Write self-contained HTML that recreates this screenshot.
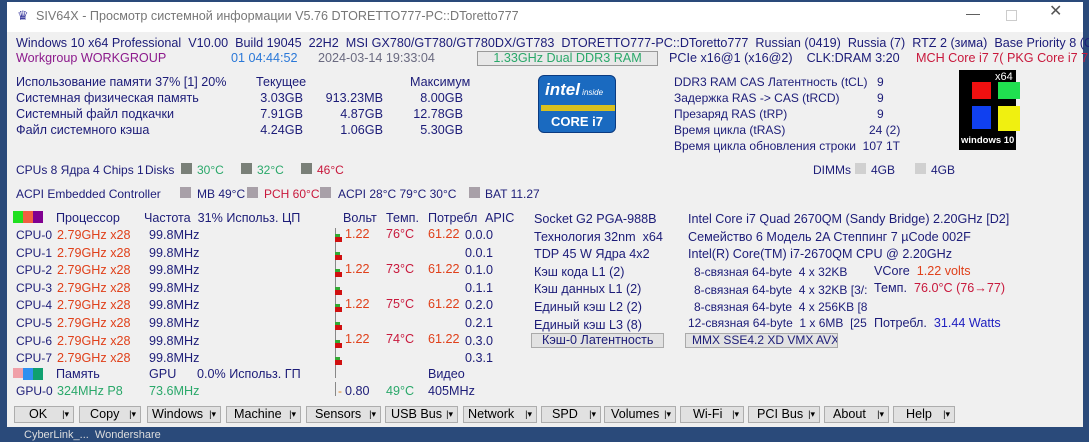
<!DOCTYPE html>
<html><head><meta charset="utf-8"><style>
*{margin:0;padding:0;box-sizing:border-box}
body{width:1089px;height:435px;overflow:hidden;background:#2a4a7a;font-family:"Liberation Sans","DejaVu Sans",sans-serif;font-size:12px;color:#1c1c78;position:relative}
.win{position:absolute;left:7px;top:2px;width:1076px;height:425px;background:#f0f0f0}
.title{position:absolute;left:0;top:0;width:1076px;height:30px;background:#fff}
.t{position:absolute;white-space:nowrap;line-height:14px}
.r{color:#e0401a}.m{color:#c8183c}.g{color:#2aa86a}.b{color:#2a78d8}.p{color:#8c1a8c}.gr{color:#6a6a80}.bl{color:#2020c0}
.rt{text-align:right}
.w{font-size:12.6px}
.sq{position:absolute;width:11px;height:11px}
.btn{position:absolute;top:406px;height:17px;border:1px solid #adadad;background:#e1e1e1;color:#000;font-size:12.6px;line-height:15px}
.btn span{position:absolute;right:4px;top:0;font-size:9px}
.bar{position:absolute;left:335px;width:1px;background:#888}
.mini{position:absolute;left:335px;width:7px;height:5px;background:#d01010}
.mini:before{content:"";position:absolute;left:0;top:-3px;width:5px;height:3px;background:#3a3}
</style></head><body>
<div class="win">
<div class="title"></div>
</div>
<div class="t" style="left:17px;top:9px;color:#4040a0;font-size:13px">&#9819;</div>
<div class="t gr w" style="left:36px;top:9px;color:#777">SIV64X - Просмотр системной информации V5.76 DTORETTO777-PC::DToretto777</div>
<div class="t" style="left:966px;top:6px;color:#555;font-size:14px">—</div>
<div class="sq" style="left:1006px;top:10px;border:1px solid #ccc;background:none"></div>
<div class="t" style="left:1049px;top:5px;color:#555;font-size:16px">✕</div>

<div class="t w" style="left:16px;top:36px">Windows 10 x64 Professional&nbsp; V10.00&nbsp; Build 19045&nbsp; 22H2&nbsp; MSI GX780/GT780/GT780DX/GT783&nbsp; DTORETTO777-PC::DToretto777&nbsp; Russian (0419)&nbsp; Russia (7)&nbsp; RTZ 2 (зима)&nbsp; Base Priority 8 (Оди</div>
<div class="t p w" style="left:16px;top:51px">Workgroup WORKGROUP</div>
<div class="t b w" style="left:231px;top:51px">01 04:44:52</div>
<div class="t gr w" style="left:318px;top:51px">2024-03-14 19:33:04</div>
<div class="t g w" style="left:477px;top:51px;width:181px;height:15px;border:1px solid #999;background:#e8e8e8;text-align:center;line-height:13px">1.33GHz Dual DDR3 RAM</div>
<div class="t w" style="left:669px;top:51px">PCIe x16@1 (x16@2)&nbsp;&nbsp;&nbsp; CLK:DRAM 3:20</div>
<div class="t m w" style="left:916px;top:51px">MCH Core i7 7( PKG Core i7 76</div>

<div class="t w" style="left:16px;top:75px">Использование памяти 37% [1] 20%</div>
<div class="t w" style="left:256px;top:75px">Текущее</div>
<div class="t w" style="left:410px;top:75px">Максимум</div>
<div class="t w" style="left:16px;top:91px">Системная физическая память</div>
<div class="t w" style="left:16px;top:107px">Системный файл подкачки</div>
<div class="t w" style="left:16px;top:123px">Файл системного кэша</div>
<div class="t rt w" style="left:230px;width:73px;top:91px">3.03GB</div>
<div class="t rt w" style="left:310px;width:73px;top:91px">913.23MB</div>
<div class="t rt w" style="left:390px;width:73px;top:91px">8.00GB</div>
<div class="t rt w" style="left:230px;width:73px;top:107px">7.91GB</div>
<div class="t rt w" style="left:310px;width:73px;top:107px">4.87GB</div>
<div class="t rt w" style="left:390px;width:73px;top:107px">12.78GB</div>
<div class="t rt w" style="left:230px;width:73px;top:123px">4.24GB</div>
<div class="t rt w" style="left:310px;width:73px;top:123px">1.06GB</div>
<div class="t rt w" style="left:390px;width:73px;top:123px">5.30GB</div>

<div style="position:absolute;left:538px;top:75px;width:78px;height:58px;background:#1a6ac0;border-radius:6px;border:1px solid #0a3a80">
<div style="position:absolute;left:6px;top:4px;color:#fff;font-size:17px;font-weight:bold;font-style:italic">intel<span style="font-size:8px;font-weight:normal"> inside</span></div>
<div style="position:absolute;left:2px;top:29px;width:74px;height:6px;background:#d8c020"></div>
<div style="position:absolute;left:12px;top:38px;color:#fff;font-size:13px;font-weight:bold">CORE i7</div>
</div>

<div class="t" style="left:674px;top:75px">DDR3 RAM CAS Латентность (tCL)</div><div class="t" style="left:877px;top:75px">9</div>
<div class="t" style="left:674px;top:91px">Задержка RAS -&gt; CAS (tRCD)</div><div class="t" style="left:877px;top:91px">9</div>
<div class="t" style="left:674px;top:107px">Презаряд RAS (tRP)</div><div class="t" style="left:877px;top:107px">9</div>
<div class="t" style="left:674px;top:123px">Время цикла (tRAS)</div><div class="t" style="left:869px;top:123px">24 (2)</div>
<div class="t" style="left:674px;top:139px">Время цикла обновления строки&nbsp; 107 1T</div>

<div style="position:absolute;left:959px;top:70px;width:57px;height:80px;background:#000">
<div class="t" style="left:36px;top:0;color:#fff;font-size:11px">x64</div>
<div style="position:absolute;left:13px;top:12px;width:19px;height:17px;background:#f01010"></div>
<div style="position:absolute;left:39px;top:12px;width:22px;height:17px;background:#20e050"></div>
<div style="position:absolute;left:13px;top:36px;width:19px;height:23px;background:#1040f0"></div>
<div style="position:absolute;left:39px;top:36px;width:22px;height:25px;background:#f0f010"></div>
<div class="t" style="left:2px;top:64px;color:#fff;font-weight:bold;font-size:9.5px">windows 10</div>
</div>

<div class="t" style="left:16px;top:163px">CPUs 8 Ядра 4 Chips 1</div>
<div class="t" style="left:145px;top:163px">Disks</div>
<div class="sq" style="left:181px;top:163px;background:#7a8078"></div><div class="t g" style="left:197px;top:163px">30°C</div>
<div class="sq" style="left:241px;top:163px;background:#7a8078"></div><div class="t g" style="left:257px;top:163px">32°C</div>
<div class="sq" style="left:301px;top:163px;background:#7a8078"></div><div class="t m" style="left:317px;top:163px">46°C</div>
<div class="t" style="left:813px;top:163px">DIMMs</div>
<div class="sq" style="left:855px;top:163px;background:#d0d0d0"></div><div class="t" style="left:871px;top:163px">4GB</div>
<div class="sq" style="left:915px;top:163px;background:#d0d0d0"></div><div class="t" style="left:931px;top:163px">4GB</div>

<div class="t" style="left:16px;top:187px">ACPI Embedded Controller</div>
<div class="sq" style="left:180px;top:187px;background:#a8a0a8"></div><div class="t" style="left:197px;top:187px">MB 49°C</div>
<div class="sq" style="left:247px;top:187px;background:#a8a0a8"></div><div class="t m" style="left:264px;top:187px">PCH 60°C</div>
<div class="sq" style="left:320px;top:187px;background:#a8a0a8"></div><div class="t" style="left:338px;top:187px">ACPI 28°C 79°C 30°C</div>
<div class="sq" style="left:469px;top:187px;background:#a8a0a8"></div><div class="t" style="left:485px;top:187px">BAT 11.27</div>

<div style="position:absolute;left:13px;top:211px;width:10px;height:12px;background:#20e020"></div>
<div style="position:absolute;left:23px;top:211px;width:10px;height:12px;background:#f06040"></div>
<div style="position:absolute;left:33px;top:211px;width:10px;height:12px;background:#800090"></div>
<div class="t w" style="left:56px;top:211px">Процессор</div>
<div class="t w" style="left:144px;top:211px">Частота&nbsp; 31% Использ. ЦП</div>
<div class="t w" style="left:343px;top:211px">Вольт</div>
<div class="t w" style="left:386px;top:211px">Темп.</div>
<div class="t w" style="left:428px;top:211px">Потребл</div>
<div class="t w" style="left:485px;top:211px">APIC</div>

<div class="bar" style="top:228px;height:150px"></div>
<div class="bar" style="top:382px;height:14px"></div>
<div class="t" style="left:16px;top:227px;line-height:17.6px">CPU-0<br>CPU-1<br>CPU-2<br>CPU-3<br>CPU-4<br>CPU-5<br>CPU-6<br>CPU-7</div>
<div class="t r w" style="left:57px;top:227px;line-height:17.6px">2.79GHz x28<br>2.79GHz x28<br>2.79GHz x28<br>2.79GHz x28<br>2.79GHz x28<br>2.79GHz x28<br>2.79GHz x28<br>2.79GHz x28</div>
<div class="t w" style="left:149px;top:227px;line-height:17.6px">99.8MHz<br>99.8MHz<br>99.8MHz<br>99.8MHz<br>99.8MHz<br>99.8MHz<br>99.8MHz<br>99.8MHz</div>
<div class="t w" style="left:465px;top:227px;line-height:17.6px">0.0.0<br>0.0.1<br>0.1.0<br>0.1.1<br>0.2.0<br>0.2.1<br>0.3.0<br>0.3.1</div>
<div class="mini" style="top:237px"></div><div class="mini" style="top:255px"></div><div class="mini" style="top:272px"></div><div class="mini" style="top:290px"></div>
<div class="mini" style="top:307px"></div><div class="mini" style="top:325px"></div><div class="mini" style="top:343px"></div><div class="mini" style="top:360px"></div>
<div class="t r w" style="left:345px;top:227px">1.22</div><div class="t m w" style="left:386px;top:227px">76°C</div><div class="t r w" style="left:428px;top:227px">61.22</div>
<div class="t r w" style="left:345px;top:262px">1.22</div><div class="t m w" style="left:386px;top:262px">73°C</div><div class="t r w" style="left:428px;top:262px">61.22</div>
<div class="t r w" style="left:345px;top:297px">1.22</div><div class="t m w" style="left:386px;top:297px">75°C</div><div class="t r w" style="left:428px;top:297px">61.22</div>
<div class="t r w" style="left:345px;top:332px">1.22</div><div class="t m w" style="left:386px;top:332px">74°C</div><div class="t r w" style="left:428px;top:332px">61.22</div>

<div style="position:absolute;left:13px;top:368px;width:10px;height:10px;background:#f0a0a8"></div>
<div style="position:absolute;left:23px;top:368px;width:10px;height:12px;background:#3090f0"></div>
<div style="position:absolute;left:33px;top:368px;width:10px;height:12px;background:#10a070"></div>
<div class="t w" style="left:56px;top:367px">Память</div>
<div class="t w" style="left:149px;top:367px">GPU</div>
<div class="t w" style="left:197px;top:367px">0.0% Использ. ГП</div>
<div class="t w" style="left:428px;top:367px">Видео</div>
<div class="t" style="left:16px;top:384px">GPU-0</div>
<div class="t g w" style="left:57px;top:384px">324MHz P8</div>
<div class="t g w" style="left:149px;top:384px">73.6MHz</div>
<div class="t" style="left:338px;top:384px;color:#e08020">-</div>
<div class="t w" style="left:345px;top:384px">0.80</div>
<div class="t g w" style="left:386px;top:384px">49°C</div>
<div class="t w" style="left:428px;top:384px">405MHz</div>

<div class="t w" style="left:534px;top:211px;line-height:17.6px">Socket G2 PGA-988B<br>Технология 32nm&nbsp; x64<br>TDP 45 W Ядра 4x2<br>Кэш кода L1 (2)<br>Кэш данных L1 (2)<br>Единый кэш L2 (2)<br>Единый кэш L3 (8)</div>
<div class="t w" style="left:688px;top:211px;line-height:17.6px">Intel Core i7 Quad 2670QM (Sandy Bridge) 2.20GHz [D2]<br>Семейство 6 Модель 2A Степпинг 7 µCode 002F<br>Intel(R) Core(TM) i7-2670QM CPU @ 2.20GHz</div>
<div class="t" style="left:694px;top:264px;line-height:17.6px">8-связная 64-byte&nbsp; 4 x 32KB<br>8-связная 64-byte&nbsp; 4 x 32KB [3/:<br>8-связная 64-byte&nbsp; 4 x 256KB [8</div>
<div class="t" style="left:688px;top:316px">12-связная 64-byte&nbsp; 1 x 6MB&nbsp; [25</div>
<div class="t w" style="left:871px;top:264px;background:#f0f0f0;padding-left:3px">VCore&nbsp; <span class="r">1.22 volts</span></div>
<div class="t w" style="left:871px;top:281px;background:#f0f0f0;padding-left:3px">Темп.&nbsp; <span class="m">76.0°C (76→77)</span></div>
<div class="t w" style="left:871px;top:316px;background:#f0f0f0;padding-left:3px">Потребл.&nbsp; <span class="bl">31.44 Watts</span></div>
<div class="t w" style="left:531px;top:333px;width:133px;height:15px;border:1px solid #aaa;background:#e2e2e2;line-height:13px;padding-left:10px">Кэш-0 Латентность</div>
<div class="t" style="left:685px;top:333px;width:153px;height:15px;border:1px solid #aaa;background:#e2e2e2;line-height:13px;padding-left:6px;overflow:hidden">MMX SSE4.2 XD VMX AVX</div>

<div class="btn" style="left:14px;width:60px"><i style="position:absolute;left:14px;font-style:normal">OK</i><span>|▾</span></div>
<div class="btn" style="left:79px;width:62px"><i style="position:absolute;left:10px;font-style:normal">Copy</i><span>|▾</span></div>
<div class="btn" style="left:147px;width:74px"><i style="position:absolute;left:4px;font-style:normal">Windows</i><span>|▾</span></div>
<div class="btn" style="left:226px;width:75px"><i style="position:absolute;left:7px;font-style:normal">Machine</i><span>|▾</span></div>
<div class="btn" style="left:306px;width:75px"><i style="position:absolute;left:8px;font-style:normal">Sensors</i><span>|▾</span></div>
<div class="btn" style="left:385px;width:73px"><i style="position:absolute;left:5px;font-style:normal">USB Bus</i><span>|▾</span></div>
<div class="btn" style="left:463px;width:74px"><i style="position:absolute;left:4px;font-style:normal">Network</i><span>|▾</span></div>
<div class="btn" style="left:541px;width:60px"><i style="position:absolute;left:10px;font-style:normal">SPD</i><span>|▾</span></div>
<div class="btn" style="left:604px;width:72px"><i style="position:absolute;left:6px;font-style:normal">Volumes</i><span>|▾</span></div>
<div class="btn" style="left:680px;width:64px"><i style="position:absolute;left:12px;font-style:normal">Wi-Fi</i><span>|▾</span></div>
<div class="btn" style="left:748px;width:72px"><i style="position:absolute;left:8px;font-style:normal">PCI Bus</i><span>|▾</span></div>
<div class="btn" style="left:824px;width:65px"><i style="position:absolute;left:8px;font-style:normal">About</i><span>|▾</span></div>
<div class="btn" style="left:893px;width:62px"><i style="position:absolute;left:12px;font-style:normal">Help</i><span>|▾</span></div>
<div class="t" style="left:24px;top:428px;color:#ddd;font-size:11px">CyberLink_...&nbsp; Wondershare</div>
</body></html>
